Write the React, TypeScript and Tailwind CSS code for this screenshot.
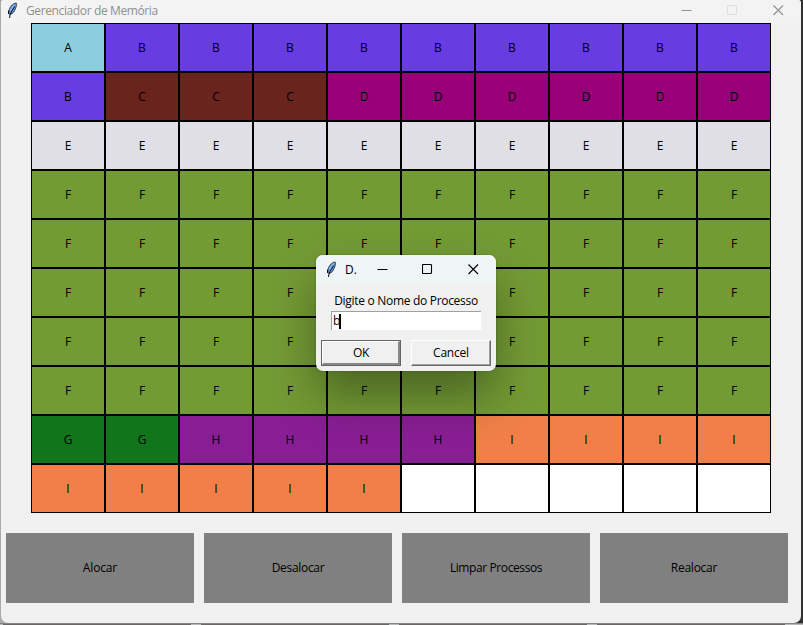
const COLORS: Record<string, string> = {
  A: 'bg-[#8bcedd]',
  B: 'bg-[#673de2]',
  C: 'bg-[#68241d]',
  D: 'bg-[#990077]',
  E: 'bg-[#e0dfe5]',
  F: 'bg-[#739b34]',
  G: 'bg-[#11751b]',
  H: 'bg-[#881e93]',
  I: 'bg-[#f08048]',
  ' ': 'bg-white',
};

const MEMORY = [
  'ABBBBBBBBB',
  'BCCCDDDDDD',
  'EEEEEEEEEE',
  'FFFFFFFFFF',
  'FFFFFFFFFF',
  'FFFFFFFFFF',
  'FFFFFFFFFF',
  'FFFFFFFFFF',
  'GGHHHHIIII',
  'IIIII     ',
].join('');

// Cells whose label lies behind the open dialog.
const COVERED = [54, 55, 64, 65];

const ACTIONS = [
  { label: 'Alocar', spacing: 'tracking-[-0.15px]' },
  { label: 'Desalocar', spacing: 'tracking-[-0.3px]' },
  { label: 'Limpar Processos', spacing: 'tracking-[-0.4px]' },
  { label: 'Realocar', spacing: 'tracking-[-0.25px]' },
];

function Feather() {
  return (
    <svg width="12" height="17" viewBox="0 0 12 17" className="shrink-0">
      <path d="M9.2 1 C6.5 1.2 3.3 4 2.3 7.5 L1.6 11 L3.2 12.5 C5.8 11.8 7.6 9.3 8 7.5 C9 5.5 9.9 3 9.2 1Z" fill="#5a9ae6" stroke="#39414c" strokeWidth="1" />
      <path d="M8 2.6 C6 3.6 4.2 6 3.6 8.5" stroke="#a9cdf2" strokeWidth="1" fill="none" />
      <path d="M7.6 4.5 L4 10.5 L2.9 13 L2.6 16" stroke="#0a0d14" strokeWidth="1" fill="none" />
      <path d="M1.5 8.5V12" stroke="#0a0d14" fill="none" />
    </svg>
  );
}

function Minimize() {
  return (
    <svg width="11" height="11" viewBox="0 0 11 11" className="shrink-0">
      <path d="M0.5 5.5H10.5" stroke="currentColor" />
    </svg>
  );
}

function Maximize() {
  return (
    <svg width="11" height="11" viewBox="0 0 11 11" className="shrink-0">
      <rect x="0.5" y="0.5" width="9" height="9" rx="0.8" fill="none" stroke="currentColor" strokeWidth="1.1" />
    </svg>
  );
}

function Close() {
  return (
    <svg width="11" height="11" viewBox="0 0 11 11" className="shrink-0">
      <path d="M0.5 0.5L10 10M10 0.5L0.5 10" stroke="currentColor" strokeWidth="1.1" />
    </svg>
  );
}

function Dialog() {
  return (
    <div className="absolute left-[316px] top-[255px] h-[116px] w-[180px] overflow-visible rounded-[7px] bg-[#f0f0f0] shadow-[0_25px_46px_0_rgba(0,0,0,0.34),0_0_2px_rgba(0,0,0,0.3)]">
      <div className="flex h-[30px] items-center rounded-t-[7px] bg-[#eff4f5] pb-px pl-[10px] text-black">
        <Feather />
        <span className="ml-[7px] w-[32px] text-[12px]">D.</span>
        <Minimize />
        <span className="ml-[34px] flex"><Maximize /></span>
        <span className="ml-[35px] flex"><Close /></span>
      </div>
      <div className="flex h-[26px] items-center justify-center pt-[5px] tracking-[-0.3px] whitespace-nowrap">
        Digite o Nome do Processo
      </div>
      <div className="mx-[15px] flex h-[19px] items-center border-l border-t border-[#a0a0a0] bg-white pl-px">
        <span className="text-[#26001a]">b</span>
        <span className="-ml-px h-[15px] w-[2px] bg-black" />
      </div>
      <div className="mt-[10px] flex gap-[10px] px-[5px]">
        <div className="h-[26px] w-[80px] border border-[#646464]">
          <div className="flex h-full items-center justify-center border-b-2 border-l border-r-2 border-t border-b-[#888] border-l-white border-r-[#888] border-t-white pl-px tracking-[-0.3px]">OK</div>
        </div>
        <div className="h-[26px] w-[80px] border-b border-l border-r border-t border-b-[#696969] border-l-white border-r-[#696969] border-t-white">
          <div className="flex h-full items-center justify-center border-b border-r border-[#a0a0a0] pl-px tracking-[-0.2px]">Cancel</div>
        </div>
      </div>
    </div>
  );
}

export default function App() {
  return (
    <div className="relative flex h-[625px] w-[803px] flex-col overflow-hidden bg-[linear-gradient(to_right,#a9a9a9_50%,#303030_50%)] font-['Open_Sans','Noto_Sans',sans-serif] text-[12px] leading-[16px] text-black">
      <div className="ml-px flex h-[623px] w-[800px] shrink-0 flex-col overflow-hidden rounded-b-[7px] rounded-t-[3px] bg-[#f0f0f0]">
        <div className="flex h-[23px] shrink-0 items-center bg-[#f3f3f3] pb-[2px] pl-[6px] text-[#8f8f8f]">
          <Feather />
          <span className="ml-[7px] w-[655px] tracking-[-0.38px]">Gerenciador de Memória</span>
          <Minimize />
          <span className="ml-[35px] flex text-[#dedede]"><Maximize /></span>
          <span className="ml-[35px] flex"><Close /></span>
        </div>
        <div className="ml-[30px] grid w-[740px] grid-cols-10">
          {MEMORY.split('').map((p, i) => (
            <div key={i} className={`flex h-[49px] items-center justify-center border border-black ${COLORS[p]}`}>
              {COVERED.includes(i) ? null : p}
            </div>
          ))}
        </div>
        <div className="mt-5 flex gap-[10px] pl-[5px]">
          {ACTIONS.map((a) => (
            <div key={a.label} className={`flex h-[70px] w-[188px] items-center justify-center bg-[#808080] ${a.spacing}`}>{a.label}</div>
          ))}
        </div>
      </div>
      <div className="flex h-[2px] shrink-0 gap-[10px] border-t border-[#858383] bg-[#b8b8b8] pl-[3px]">
        {ACTIONS.map((a) => (
          <div key={a.label} className="h-px w-[188px] bg-[#6a6767]" />
        ))}
      </div>
      <Dialog />
    </div>
  );
}
